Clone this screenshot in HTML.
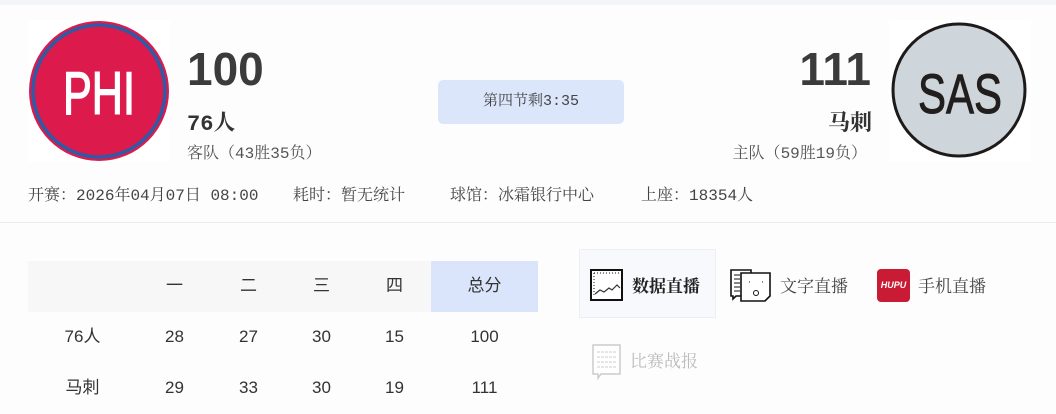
<!DOCTYPE html>
<html><head><meta charset="utf-8"><style>
*{margin:0;padding:0;box-sizing:border-box}
body{width:1056px;height:414px;background:#fdfdfe;font-family:"Liberation Sans","Noto Sans CJK SC",sans-serif;color:#333;position:relative;overflow:hidden}
.a{position:absolute;white-space:nowrap}
.serif{font-family:"Liberation Mono","Noto Serif CJK SC",serif}
.logo{position:absolute;width:142px;height:142px;background:#fff}
.td{position:absolute;width:73px;text-align:center;font-size:17px;color:#333;line-height:22px;height:22px}
.c{font-family:"Noto Serif CJK SC",serif}
</style></head><body>
<div class="a" style="left:0;top:0;width:1056px;height:5px;background:#f4f5f9"></div>

<div class="logo" style="left:28px;top:20px">
<svg width="142" height="142"><circle cx="71" cy="71" r="70" fill="#dc1a4b"/><circle cx="71" cy="71" r="66" fill="none" stroke="#2e5aa6" stroke-width="3.5"/>
<text x="71" y="94" text-anchor="middle" font-family="Liberation Sans Narrow,Liberation Sans,sans-serif" font-size="60" fill="#fff" stroke="#fff" stroke-width="1.5" textLength="72" lengthAdjust="spacingAndGlyphs">PHI</text></svg></div>
<div class="a" style="left:187px;top:42px;font-size:46px;font-weight:bold;color:#3b3b3b">100</div>
<div class="a serif" style="left:187px;top:106px;font-size:22px;font-weight:bold;color:#333">76人</div>
<div class="a serif" style="left:187px;top:140px;font-size:16px;color:#555">客队<span class="c">（</span>43胜35负<span class="c">）</span></div>

<div class="a serif" style="left:438px;top:80px;width:186px;height:44px;background:#dce6fb;border-radius:5px;text-align:center;line-height:44px;font-size:15px;color:#444">第四节剩3:35</div>

<div class="a" style="right:185px;top:42px;font-size:46px;font-weight:bold;color:#3b3b3b">111</div>
<div class="a serif" style="right:184px;top:106px;font-size:22px;font-weight:bold;color:#333">马刺</div>
<div class="a serif" style="right:189px;top:140px;font-size:16px;color:#555">主队<span class="c">（</span>59胜19负<span class="c">）</span></div>
<div class="logo" style="left:889px;top:20px">
<svg width="142" height="142"><circle cx="70" cy="70" r="66" fill="#cfd6db" stroke="#1e1a1a" stroke-width="3"/>
<text x="71" y="93" text-anchor="middle" font-family="Liberation Sans Narrow,Liberation Sans,sans-serif" font-size="56" fill="#221e1e" stroke="#221e1e" stroke-width="1" textLength="84" lengthAdjust="spacingAndGlyphs">SAS</text></svg></div>

<div class="a serif" style="left:28px;top:182px;font-size:16px;color:#444">开赛<span class="c">：</span>2026年04月07日 08:00</div>
<div class="a serif" style="left:293px;top:182px;font-size:16px;color:#444">耗时<span class="c">：</span>暂无统计</div>
<div class="a serif" style="left:450px;top:182px;font-size:16px;color:#444">球馆<span class="c">：</span>冰霜银行中心</div>
<div class="a serif" style="left:641px;top:182px;font-size:16px;color:#444">上座<span class="c">：</span>18354人</div>
<div class="a" style="left:0;top:222px;width:1056px;height:1px;background:#ececf0"></div>

<div class="a" style="left:28px;top:261px;width:510px;height:51px;background:#f7f7f7"></div>
<div class="a" style="left:431px;top:261px;width:107px;height:51px;background:#dae5fc"></div>
<div class="td" style="left:138px;top:275px">一</div>
<div class="td" style="left:212px;top:275px">二</div>
<div class="td" style="left:285px;top:275px">三</div>
<div class="td" style="left:358px;top:275px">四</div>
<div class="td" style="left:448px;top:275px">总分</div>
<div class="td" style="left:46px;top:326px">76人</div>
<div class="td" style="left:138px;top:326px">28</div>
<div class="td" style="left:212px;top:326px">27</div>
<div class="td" style="left:285px;top:326px">30</div>
<div class="td" style="left:358px;top:326px">15</div>
<div class="td" style="left:448px;top:326px">100</div>
<div class="td" style="left:46px;top:377px">马刺</div>
<div class="td" style="left:138px;top:377px">29</div>
<div class="td" style="left:212px;top:377px">33</div>
<div class="td" style="left:285px;top:377px">30</div>
<div class="td" style="left:358px;top:377px">19</div>
<div class="td" style="left:448px;top:377px">111</div>

<div class="a" style="left:579px;top:249px;width:137px;height:69px;background:#f8f9fc;border:1px solid #eeeff2"></div>
<svg class="a" style="left:590px;top:269px" width="34" height="33"><rect x="1" y="1" width="31" height="30" fill="#fff" stroke="#111" stroke-width="2"/><path d="M4 4h26M4 4v24" stroke="#111" stroke-dasharray="1 2"/><path d="M5 25l5-4 4 2 5-4 3 2 5-5 3 3" fill="none" stroke="#333" stroke-width="1.2"/></svg>
<div class="a serif" style="left:632px;top:272px;font-size:17px;font-weight:bold;color:#222">数据直播</div>
<svg class="a" style="left:729px;top:268px" width="44" height="36"><path d="M2 2h20v26H7l-3 3v-3H2z" fill="#fff" stroke="#111" stroke-width="1.6"/><path d="M5 7h6M5 11h6M5 15h6M5 19h6M5 23h6" stroke="#111"/><path d="M12 5h29v23l-5 5H12z" fill="#fff" stroke="#111" stroke-width="1.6"/><circle cx="27" cy="25" r="2.5" fill="none" stroke="#111"/><path d="M20 14h1M33 14h1" stroke="#111"/></svg>
<div class="a serif" style="left:780px;top:272px;font-size:17px;color:#444">文字直播</div>
<div class="a" style="left:877px;top:269px;width:33px;height:33px;background:#c91c34;border-radius:4px;color:#fff;font-size:9px;font-weight:bold;font-style:italic;text-align:center;line-height:33px">HUPU</div>
<div class="a serif" style="left:918px;top:272px;font-size:17px;color:#444">手机直播</div>
<svg class="a" style="left:592px;top:344px" width="30" height="36"><path d="M1 1h27v29H9l-3 4v-4H1z" fill="#fff" stroke="#ccc" stroke-width="1.5"/><path d="M5 8h19M5 13h19M5 18h19M5 23h19" stroke="#ccc" stroke-dasharray="3 1"/></svg>
<div class="a serif" style="left:630px;top:347px;font-size:17px;color:#bbb">比赛战报</div>
</body></html>
